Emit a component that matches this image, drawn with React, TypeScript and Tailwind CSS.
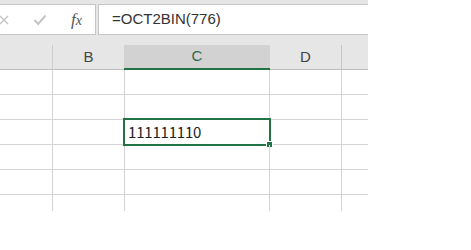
import React from "react";

const sans = "font-['Liberation_Sans',Arial,sans-serif]";

const CancelIcon = () => (
  <svg width="10" height="10" viewBox="0 0 10 10" className="ml-[-1px] shrink-0">
    <path d="M1 1 L9 9 M9 1 L1 9" stroke="#c4c4c4" strokeWidth="1.4" fill="none" />
  </svg>
);

const EnterIcon = () => (
  <svg width="14" height="12" viewBox="0 0 14 12" className="ml-[24px] shrink-0">
    <path d="M1.5 6 L5.2 10 L12.5 1.5" stroke="#c4c4c4" strokeWidth="2" fill="none" />
  </svg>
);

const GridRow = ({ selected, last }: { selected?: boolean; last?: boolean }) => (
  <div
    className={
      "grid grid-cols-[53px_72px_145px_72px_26px] " +
      (last ? "h-[16px]" : "h-[25px]")
    }
  >
    <div className={"border-r border-[#d4d4d4] " + (last ? "" : "border-b")} />
    <div className={"border-r border-[#d4d4d4] " + (last ? "" : "border-b")} />
    <div className={"relative border-r border-[#d4d4d4] " + (last ? "" : "border-b")}>
      {selected && (
        <>
          <div className="flex h-full items-center pl-[3px] text-[15px] tracking-[-0.2px] text-[#222] font-['Noto_Sans_CJK_JP',sans-serif]">
            111111110
          </div>
          <div className="absolute -left-[2px] -top-[2px] h-[28px] w-[148px] border-2 border-[#217346]">
            <div className="absolute -bottom-[4px] -right-[4px] h-[7px] w-[7px] border border-white bg-[#217346]" />
          </div>
        </>
      )}
    </div>
    <div className={"border-r border-[#d4d4d4] " + (last ? "" : "border-b")} />
    <div className={"border-[#d4d4d4] " + (last ? "" : "border-b")} />
  </div>
);

export default function App() {
  return (
    <div className={"h-[250px] w-[471px] overflow-hidden bg-white " + sans}>
      <div className="w-[368px]">
        {/* formula bar */}
        <div className="flex gap-[2px] bg-[#e6e6e6] pb-[10px] pt-[4px]">
          <div className="flex h-[31px] w-[96px] items-center border-y border-r border-[#c6c6c6] bg-white">
            <CancelIcon />
            <EnterIcon />
            <span className="ml-[24px] font-['Liberation_Serif',serif] text-[17px] italic text-[#555]">
              f<span className="text-[14px]">x</span>
            </span>
          </div>
          <div className="flex h-[31px] flex-1 items-center border-y border-l border-[#c6c6c6] bg-white pl-[13px] text-[15px] text-[#333]">
            =OCT2BIN(776)
          </div>
        </div>

        {/* column headers */}
        <div className="grid h-[25px] grid-cols-[53px_71px_146px_72px_26px] bg-[#e6e6e6] text-[15px]">
          <div className="border-b border-r border-b-[#bdbdbd] border-r-[#cfcfcf]" />
          <div className="flex items-center justify-center border-b border-[#bdbdbd] text-[#444]">B</div>
          <div className="flex items-center justify-center border-b-2 border-[#217346] bg-[#d2d2d2] text-[#2f6a45]">
            C
          </div>
          <div className="flex items-center justify-center border-b border-r border-b-[#bdbdbd] border-r-[#c6c6c6] text-[#444]">
            D
          </div>
          <div className="border-b border-[#bdbdbd]" />
        </div>

        {/* cells */}
        <GridRow />
        <GridRow />
        <GridRow selected />
        <GridRow />
        <GridRow />
        <GridRow last />
      </div>
    </div>
  );
}
